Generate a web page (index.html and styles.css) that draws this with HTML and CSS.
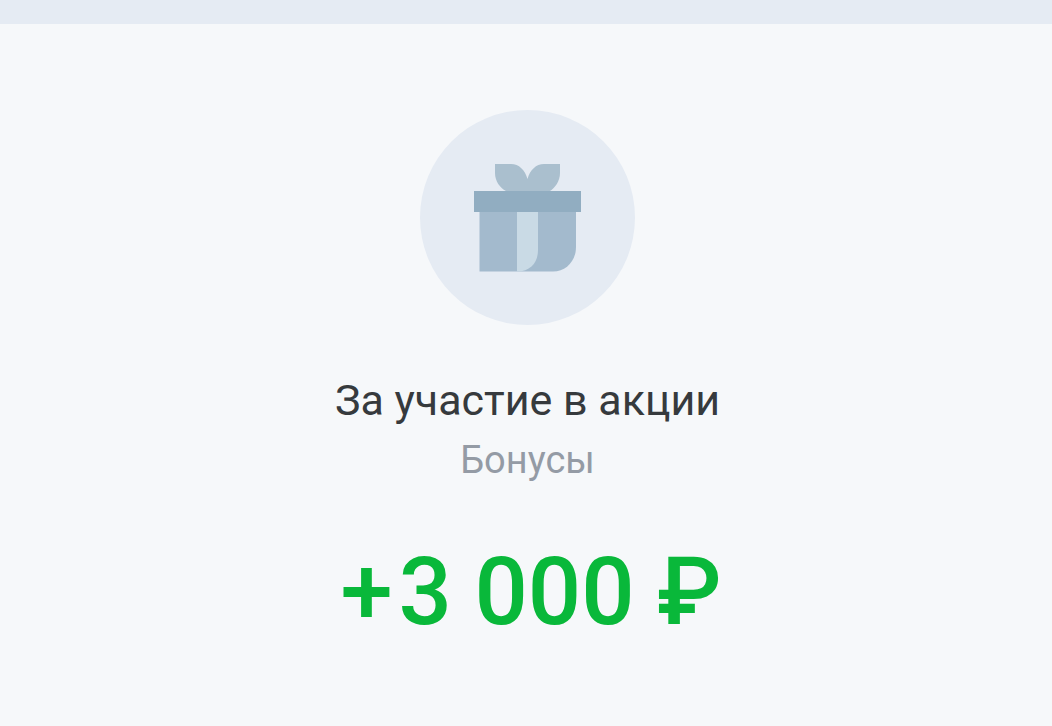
FILE: index.html
```html
<!DOCTYPE html>
<html lang="ru">
<head>
  <meta charset="UTF-8">
  <title>Бонусы</title>
  <link rel="stylesheet" href="styles.css">
</head>
<body>

<div class="topbar"></div>

<main class="details">
  <div class="icon-circle">
    <svg class="gift" width="107" height="108" viewBox="0 0 107 108">
      <!-- bow -->
      <path d="M21 0H37C45 0 51 6 53.5 15C56 6 62 0 70 0H86V9C86 17 81 24 76 27H32C26 24 21 17 21 9Z" fill="#aabfce"/>
      <!-- box -->
      <path d="M5.5 48H102V83C102 97 92 107.5 79 107.5H5.5Z" fill="#a3bacd"/>
      <!-- ribbon -->
      <path d="M43 48H64V86C64 98 57 107.5 43 107.5Z" fill="#c9dae5"/>
      <!-- lid -->
      <rect x="0" y="27" width="107" height="21" fill="#91adc1"/>
    </svg>
  </div>
  <h1 class="title">За участие в акции</h1>
  <p class="category">Бонусы</p>
  <p class="amount"><span class="sign">+</span>3 000 ₽</p>
</main>

</body>
</html>
```

FILE: styles.css
```css
body {
  margin: 0;
  height: 726px;
  overflow: hidden;
  background: #f6f8fa;
  font-family: Roboto, sans-serif;
}
.topbar {
  height: 24px;
  background: #e5ebf3;
}
.details {
  display: flex;
  flex-direction: column;
  align-items: center;
  padding-top: 86px;
  padding-left: 3px;
}
.icon-circle {
  display: flex;
  align-items: center;
  justify-content: center;
  width: 215px;
  height: 215px;
  border-radius: 50%;
  background: #e5ebf3;
}
.title {
  margin: 49px 0 0;
  font-size: 43px;
  line-height: 52px;
  font-weight: 400;
  color: #363a3d;
}
.category {
  margin: 12px 0 0;
  font-size: 38px;
  line-height: 44px;
  color: #949ba5;
}
.amount {
  margin: 58px 0 0;
  padding-left: 7px;
  font-size: 94px;
  line-height: 104px;
  word-spacing: -1px;
  font-weight: 500;
  color: #09b83a;
}
.sign {
  margin-right: 6px;
}
```
